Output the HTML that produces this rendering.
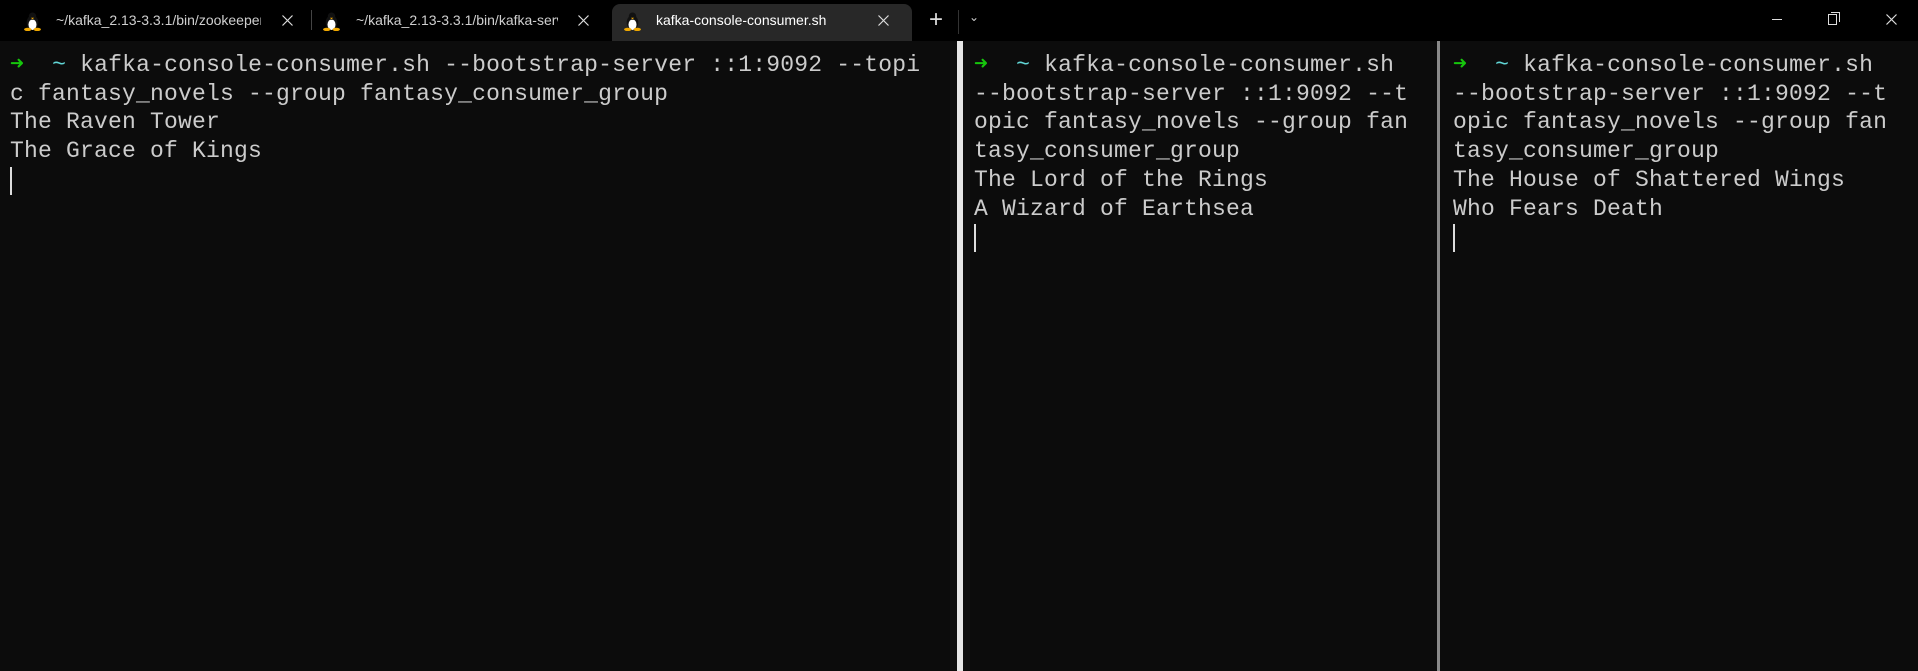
<!DOCTYPE html>
<html><head><meta charset="utf-8"><style>
*{margin:0;padding:0;box-sizing:border-box}
body{width:1918px;height:671px;background:#0c0c0c;overflow:hidden;position:relative;font-family:"Liberation Sans",sans-serif}
.bar{position:absolute;left:0;top:0;width:1918px;height:41px;background:#000}
.tab{position:absolute;top:0;height:41px;color:#cfcfcf;font-size:14px;}
.tab .t{position:absolute;top:12px;white-space:nowrap;overflow:hidden}
.xs{position:absolute;width:11px;height:11px}
.act{background:#282828;border-radius:8px 8px 0 0;top:4px;height:37px}
.tux{position:absolute;width:17px;height:19px}
.pane{position:absolute;top:41px;height:630px;font-family:"Liberation Mono",monospace;font-size:23px;color:#cccccc;white-space:pre;letter-spacing:0.2px}
.ln{position:absolute;left:0;height:29px;line-height:29px}
.g{color:#16c60c}.c{color:#61d6d6}
.cur{position:absolute;width:2px;height:28px;background:#ddd}
</style></head><body>
<div class="bar"></div>
<svg width="0" height="0" style="position:absolute"><defs><g id="tux"><ellipse cx="8" cy="10" rx="5.5" ry="7" fill="#111"/><ellipse cx="8" cy="12" rx="3.8" ry="5" fill="#fff"/><circle cx="8" cy="4" r="3.5" fill="#111"/><path d="M6.5 5.5 L9.5 5.5 L8 7Z" fill="#f0a800"/><ellipse cx="3.5" cy="16.5" rx="3.5" ry="1.6" fill="#f0a800"/><ellipse cx="12.5" cy="16.5" rx="3.5" ry="1.6" fill="#f0a800"/></g>
<path id="xx" d="M0.5 0.5 L10.5 10.5 M10.5 0.5 L0.5 10.5" stroke="#ddd" stroke-width="1.2"/></defs></svg>
<div class="tab" style="left:0;width:311px">
 <svg class="tux" style="left:24px;top:12px" viewBox="0 0 16 18"><use href="#tux"/></svg>
 <div class="t" style="left:56px;width:205px">~/kafka_2.13-3.3.1/bin/zookeeper-server-start.sh</div>
 <svg class="xs" style="left:282px;top:15px" viewBox="0 0 11 11"><use href="#xx"/></svg>
</div>
<div style="position:absolute;left:311px;top:10px;width:1px;height:20px;background:#444"></div>
<div class="tab" style="left:312px;width:300px">
 <svg class="tux" style="left:11px;top:12px" viewBox="0 0 16 18"><use href="#tux"/></svg>
 <div class="t" style="left:44px;width:202px">~/kafka_2.13-3.3.1/bin/kafka-server-start.sh</div>
 <svg class="xs" style="left:266px;top:15px" viewBox="0 0 11 11"><use href="#xx"/></svg>
</div>
<div class="tab act" style="left:612px;width:300px">
 <svg class="tux" style="left:12px;top:8px" viewBox="0 0 16 18"><use href="#tux"/></svg>
 <div class="t" style="left:44px;top:8px;color:#fff">kafka-console-consumer.sh</div>
 <svg class="xs" style="left:266px;top:11px" viewBox="0 0 11 11"><use href="#xx"/></svg>
</div>
<div style="position:absolute;left:929px;top:6px;color:#ddd;font-size:24px;font-weight:300">+</div>
<div style="position:absolute;left:958px;top:10px;width:1px;height:24px;background:#333"></div>
<div style="position:absolute;left:969px;top:10px;color:#ccc;font-size:12px">⌄</div>
<div style="position:absolute;left:1772px;top:19px;width:10px;height:1px;background:#ddd"></div>
<div style="position:absolute;left:1828px;top:14px;width:9px;height:11px;border:1px solid #ddd"></div>
<div style="position:absolute;left:1831px;top:12px;width:9px;height:10px;border-top:1px solid #ddd;border-right:1px solid #ddd"></div>
<svg class="xs" style="left:1886px;top:14px" viewBox="0 0 11 11"><use href="#xx"/></svg>

<div style="position:absolute;left:957px;top:41px;width:6px;height:630px;background:#e6e6e6"></div>
<div style="position:absolute;left:1437px;top:41px;width:3px;height:630px;background:#8a8a8a"></div>

<div class="pane" style="left:10px;width:945px">
 <div class="ln" style="top:10px"><span class="g">➜</span>  <span class="c">~</span> kafka-console-consumer.sh --bootstrap-server ::1:9092 --topi</div>
 <div class="ln" style="top:39px">c fantasy_novels --group fantasy_consumer_group</div>
 <div class="ln" style="top:67px">The Raven Tower</div>
 <div class="ln" style="top:96px">The Grace of Kings</div>
 <div class="cur" style="left:0;top:126px"></div>
</div>
<div class="pane" style="left:974px;width:460px">
 <div class="ln" style="top:10px"><span class="g">➜</span>  <span class="c">~</span> kafka-console-consumer.sh</div>
 <div class="ln" style="top:39px">--bootstrap-server ::1:9092 --t</div>
 <div class="ln" style="top:67px">opic fantasy_novels --group fan</div>
 <div class="ln" style="top:96px">tasy_consumer_group</div>
 <div class="ln" style="top:125px">The Lord of the Rings</div>
 <div class="ln" style="top:154px">A Wizard of Earthsea</div>
 <div class="cur" style="left:0;top:183px"></div>
</div>
<div class="pane" style="left:1453px;width:465px">
 <div class="ln" style="top:10px"><span class="g">➜</span>  <span class="c">~</span> kafka-console-consumer.sh</div>
 <div class="ln" style="top:39px">--bootstrap-server ::1:9092 --t</div>
 <div class="ln" style="top:67px">opic fantasy_novels --group fan</div>
 <div class="ln" style="top:96px">tasy_consumer_group</div>
 <div class="ln" style="top:125px">The House of Shattered Wings</div>
 <div class="ln" style="top:154px">Who Fears Death</div>
 <div class="cur" style="left:0;top:183px"></div>
</div>
</body></html>
